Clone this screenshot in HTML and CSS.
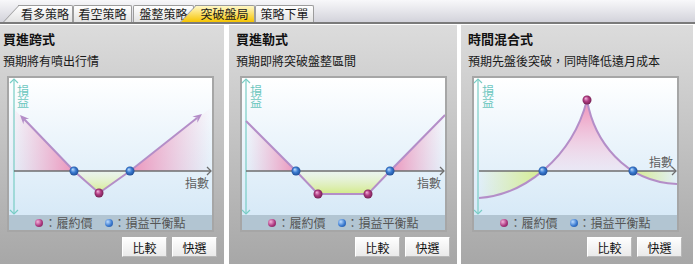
FILE: index.html
```html
<!DOCTYPE html>
<html lang="zh-Hant">

<head>
    <meta charset="UTF-8">
    <title>突破盤局</title>
    <link rel="stylesheet" href="styles.css">
</head>

<body>

    <!-- gradients shared by the three charts -->
    <svg class="defs" width="0" height="0">
        <defs>
            <linearGradient id="pinkL" x1="0" y1="0" x2="1" y2="0">
                <stop offset="0" stop-color="#f2a6c6" stop-opacity="0" />
                <stop offset="1" stop-color="#ec8fb8" stop-opacity="0.95" />
            </linearGradient>
            <linearGradient id="pinkR" x1="1" y1="0" x2="0" y2="0">
                <stop offset="0" stop-color="#f2a6c6" stop-opacity="0" />
                <stop offset="1" stop-color="#ec8fb8" stop-opacity="0.95" />
            </linearGradient>
            <linearGradient id="greenV" x1="0" y1="0" x2="0" y2="1">
                <stop offset="0" stop-color="#f4f9e0" stop-opacity="0.4" />
                <stop offset="1" stop-color="#d2ea86" />
            </linearGradient>
            <linearGradient id="pinkV3" gradientUnits="userSpaceOnUse" x1="0" y1="22" x2="0" y2="93">
                <stop offset="0" stop-color="#ee8cb6" />
                <stop offset="1" stop-color="#f2dcee" stop-opacity="0.4" />
            </linearGradient>
            <linearGradient id="greenL3" gradientUnits="userSpaceOnUse" x1="5" y1="0" x2="69" y2="0">
                <stop offset="0" stop-color="#d6ec8e" stop-opacity="0" />
                <stop offset="1" stop-color="#d6ec8e" />
            </linearGradient>
            <linearGradient id="greenR3" gradientUnits="userSpaceOnUse" x1="203" y1="0" x2="159" y2="0">
                <stop offset="0" stop-color="#d6ec8e" stop-opacity="0" />
                <stop offset="1" stop-color="#d6ec8e" />
            </linearGradient>
            <radialGradient id="ballP" cx="0.5" cy="0.5" r="0.55" fx="0.35" fy="0.3">
                <stop offset="0" stop-color="#f6b8e0" />
                <stop offset="0.5" stop-color="#b03c82" />
                <stop offset="1" stop-color="#6c1c4c" />
            </radialGradient>
            <radialGradient id="ballB" cx="0.5" cy="0.5" r="0.55" fx="0.35" fy="0.3">
                <stop offset="0" stop-color="#c0e0ff" />
                <stop offset="0.5" stop-color="#3c7cd2" />
                <stop offset="1" stop-color="#1a4890" />
            </radialGradient>
            <clipPath id="clipTop"><rect x="0" y="0" width="203" height="93" /></clipPath>
            <clipPath id="clipBL"><rect x="0" y="93" width="113" height="44" /></clipPath>
            <clipPath id="clipBR"><rect x="113" y="93" width="90" height="44" /></clipPath>
        </defs>
    </svg>

    <header class="tabbar">
        <nav class="tabs">
            <span class="tab slant t1">看多策略</span>
            <span class="tab t2">看空策略</span>
            <span class="tab t3">盤整策略</span>
            <span class="tab slant active t4">突破盤局</span>
            <span class="tab t5">策略下單</span>
        </nav>
    </header>

    <main class="panels">

        <section class="panel p1">
            <h2>買進跨式</h2>
            <p class="desc">預期將有噴出行情</p>
            <div class="body">
                <div class="chart">
                    <svg class="plot" width="203" height="137" viewBox="0 0 203 137">
                        <polygon points="0,26 65,93 0,93" fill="url(#pinkL)" />
                        <polygon points="121,93 203,29 203,93" fill="url(#pinkR)" />
                        <polygon points="65,93 90,115 121,93" fill="url(#greenV)" />
                        <line class="yaxis" x1="5" y1="1" x2="5" y2="136" />
                        <polyline class="yaxis" points="1,5 5,1 9,5" />
                        <polyline class="yaxis" points="1,132 5,136 9,132" />
                        <text class="ylabel" x="14" y="7">損益</text>
                        <line class="xaxis" x1="5" y1="93" x2="202" y2="93" />
                        <polyline class="xaxis" points="198,89 202,93 198,97" />
                        <text class="xlabel" x="176" y="110">指數</text>
                        <polyline class="payoff" points="15,41 65,93 90,115 121,93 188,40" />
                        <polygon class="head" points="11,37 20.1,40.7 15.2,41.3 14.4,46.3" />
                        <polygon class="head" points="193,36 188.4,44.7 188.3,39.7 183.4,38.4" />
                        <circle cx="65" cy="93" r="4.5" fill="url(#ballB)" />
                        <circle cx="121" cy="93" r="4.5" fill="url(#ballB)" />
                        <circle cx="90" cy="115" r="4.5" fill="url(#ballP)" />
                    </svg>
                    <div class="legend"><i class="ball strike"></i>：履約價<i class="ball be"></i>：損益平衡點</div>
                </div>
                <div class="btns"><button>比較</button><button>快選</button></div>
            </div>
        </section>

        <section class="panel p2">
            <h2>買進勒式</h2>
            <p class="desc">預期即將突破盤整區間</p>
            <div class="body">
                <div class="chart">
                    <svg class="plot" width="203" height="137" viewBox="0 0 203 137">
                        <polygon points="4,43 54,93 4,93" fill="url(#pinkL)" />
                        <polygon points="148,93 203,37 203,93" fill="url(#pinkR)" />
                        <polygon points="54,93 76,116 126,116 148,93" fill="url(#greenV)" />
                        <line class="yaxis" x1="4" y1="1" x2="4" y2="136" />
                        <polyline class="yaxis" points="0,5 4,1 8,5" />
                        <polyline class="yaxis" points="0,132 4,136 8,132" />
                        <text class="ylabel" x="14" y="7">損益</text>
                        <line class="xaxis" x1="4" y1="93" x2="202" y2="93" />
                        <polyline class="xaxis" points="198,89 202,93 198,97" />
                        <text class="xlabel" x="175" y="110">指數</text>
                        <polyline class="payoff" points="4,43 54,93 76,116 126,116 148,93 203,37" />
                        <circle cx="54" cy="93" r="4.5" fill="url(#ballB)" />
                        <circle cx="148" cy="93" r="4.5" fill="url(#ballB)" />
                        <circle cx="76" cy="116" r="4.5" fill="url(#ballP)" />
                        <circle cx="126" cy="116" r="4.5" fill="url(#ballP)" />
                    </svg>
                    <div class="legend"><i class="ball strike"></i>：履約價<i class="ball be"></i>：損益平衡點</div>
                </div>
                <div class="btns"><button>比較</button><button>快選</button></div>
            </div>
        </section>

        <section class="panel p3">
            <h2>時間混合式</h2>
            <p class="desc">預期先盤後突破，同時降低遠月成本</p>
            <div class="body">
                <div class="chart">
                    <svg class="plot" width="203" height="137" viewBox="0 0 203 137">
                        <path d="M5,120 C50,117 98,80 113,22 C120,62 150,104 203,106 L203,93 L5,93 Z" fill="url(#pinkV3)" clip-path="url(#clipTop)" />
                        <path d="M5,120 C50,117 98,80 113,22 C120,62 150,104 203,106 L203,93 L5,93 Z" fill="url(#greenL3)" clip-path="url(#clipBL)" />
                        <path d="M5,120 C50,117 98,80 113,22 C120,62 150,104 203,106 L203,93 L5,93 Z" fill="url(#greenR3)" clip-path="url(#clipBR)" />
                        <line class="yaxis" x1="4" y1="1" x2="4" y2="136" />
                        <polyline class="yaxis" points="0,5 4,1 8,5" />
                        <polyline class="yaxis" points="0,132 4,136 8,132" />
                        <text class="ylabel" x="14" y="7">損益</text>
                        <line class="xaxis" x1="5" y1="93" x2="202" y2="93" />
                        <polyline class="xaxis" points="198,89 202,93 198,97" />
                        <text class="xlabel" x="175" y="89">指數</text>
                        <path class="payoff" d="M5,120 C50,117 98,80 113,22 C120,62 150,104 203,106" />
                        <circle cx="69" cy="93" r="4.5" fill="url(#ballB)" />
                        <circle cx="159" cy="93" r="4.5" fill="url(#ballB)" />
                        <circle cx="113" cy="22" r="4.5" fill="url(#ballP)" />
                    </svg>
                    <div class="legend"><i class="ball strike"></i>：履約價<i class="ball be"></i>：損益平衡點</div>
                </div>
                <div class="btns"><button>比較</button><button>快選</button></div>
            </div>
        </section>

    </main>

</body>

</html>
```

FILE: styles.css
```css
body {
    margin: 0;
    background-color: white;
    font-family: "Noto Sans CJK TC", "Noto Sans CJK SC", sans-serif;
    color: #1a1a1a;
}

.defs {
    position: absolute;
    width: 0;
    height: 0;
}

/* tab strip */
.tabbar {
    height: 22px;
    border-bottom: 2px solid #7b7b7b;
    background: linear-gradient(#f8f8fa, #d3d3db);
}

.tabs {
    display: flex;
    align-items: flex-end;
    height: 22px;
    padding-left: 18px;
}

.tab {
    position: relative;
    z-index: 1;
    box-sizing: border-box;
    height: 17px;
    border: 1px solid #9c9c9c;
    border-bottom: 0;
    border-radius: 2px 2px 0 0;
    background: linear-gradient(#ffffff, #e2e2e2);
    font-size: 12px;
    line-height: 16px;
    text-align: center;
    color: #1c1c1c;
}

.t1 { width: 55px; }
.t2 { width: 59px; }
.t3 { width: 61px; margin-left: 1px; }
.t4 { width: 60px; margin-left: 1px; }
.t5 { width: 59px; }

.tab.slant {
    border-left: 0;
    border-top-left-radius: 0;
}

.tab.slant::before {
    content: "";
    position: absolute;
    z-index: -1;
    top: -1px;
    bottom: 0;
    left: -15px;
    width: 22px;
    background: inherit;
    border-left: 1px solid #9c9c9c;
    border-top: 1px solid #9c9c9c;
    transform: skewX(-43deg);
    transform-origin: bottom left;
}

.tab.active {
    z-index: 2;
    background: linear-gradient(#fff8c8, #f6c400);
}

/* strategy panels */
.panels {
    display: flex;
    margin-top: 1px;
    margin-left: -4px;
}

.panel {
    box-sizing: border-box;
    width: 228px;
    height: 239px;
    padding: 4px 0 0 7px;
    background: linear-gradient(#dcdcdc, #a7a7a7);
}

.p1 { margin-right: 5px; }
.p2 { margin-right: 4px; }
.p3 { width: 232px; }

.panel h2 {
    margin: 0;
    font-size: 13px;
    line-height: 20px;
    font-weight: bold;
    color: #111;
}

.desc {
    margin: 2px 0 0;
    font-size: 12px;
    line-height: 20px;
}

.body {
    width: 210px;
    margin: 5px 0 0 4px;
}

.chart {
    box-sizing: border-box;
    width: 207px;
    border: 2px solid #a6a6a6;
    background: linear-gradient(#ffffff, #eef6fc 35%, #d3e7f6);
}

.plot {
    display: block;
}

.yaxis {
    stroke: #78cdc5;
    stroke-width: 1.2;
    fill: none;
}

.xaxis {
    stroke: #6e6e6e;
    stroke-width: 1.3;
    fill: none;
}

.ylabel {
    fill: #6cc7bf;
    font-size: 12px;
    writing-mode: vertical-rl;
    letter-spacing: -1px;
}

.xlabel {
    fill: #5e5e5e;
    font-size: 12px;
}

.payoff {
    stroke: #b48ec8;
    stroke-width: 2;
    fill: none;
}

.head {
    fill: #b48ec8;
}

.legend {
    display: flex;
    justify-content: center;
    align-items: center;
    height: 15px;
    background: #b2c5d2;
    font-size: 12px;
    color: #555;
}

.ball {
    width: 8px;
    height: 8px;
    border-radius: 50%;
    margin-right: 1px;
}

.ball.strike {
    background: radial-gradient(circle at 35% 35%, #f4b4dc, #ac3880 55%, #6c1c4c);
}

.ball.be {
    margin-left: 12px;
    background: radial-gradient(circle at 35% 35%, #bcdcff, #3a7ad0 55%, #1c4a92);
}

.btns {
    display: flex;
    justify-content: flex-end;
    gap: 5px;
    margin-top: 5px;
}

.btns button {
    width: 45px;
    height: 20px;
    padding: 0;
    font: 12px "Noto Sans CJK TC", "Noto Sans CJK SC", sans-serif;
    color: #111;
    border: 1px solid;
    border-color: #ffffff #b8b8b8 #b8b8b8 #ffffff;
    background: linear-gradient(#fefefe, #eaeaea);
}
```
